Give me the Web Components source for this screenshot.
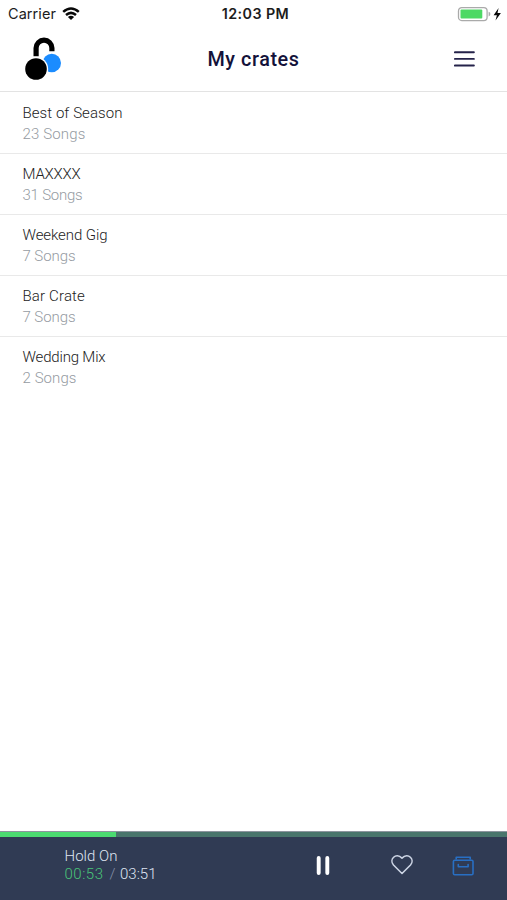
<!DOCTYPE html>
<html lang="en">
<head>
<meta charset="utf-8">
<title>My crates</title>
<style>
html,body{margin:0;height:100%;background:#fff;overflow:hidden}
body{font-family:Roboto,"Liberation Sans",sans-serif}
</style>
</head>
<body>
<crate-app></crate-app>
<script>
const define = (name, html, setup) => customElements.define(name, class extends HTMLElement {
  connectedCallback() {
    if (this.shadowRoot) return;
    const t = document.createElement('template');
    t.innerHTML = html;
    this.attachShadow({mode: 'open'}).append(t.content.cloneNode(true));
    if (setup) setup(this, this.shadowRoot);
  }
});

// A single line of text tracked to the advance width given in its "w" attribute.
define('tracked-text', `<style>
:host{display:block;white-space:pre;width:max-content}
span{display:inline-block}
</style><span><slot></slot></span>`, (el, root) => {
  const span = root.querySelector('span');
  const gap = (Number(el.getAttribute('w')) - span.getBoundingClientRect().width) / el.textContent.length;
  span.style.letterSpacing = gap.toFixed(3) + 'px';
});

define('status-bar', `<style>
:host{display:grid;grid-template-columns:1fr auto 1fr;align-items:center;height:27px;padding:0 5px 0 8px;box-sizing:border-box;color:#1c1c1c;font:400 14.5px/27px Inter,sans-serif}
.l{display:flex;align-items:center;gap:6px}.r{display:flex;justify-content:flex-end}
.time{font-weight:600;font-size:14.3px;margin-left:1px}
svg{display:block}
</style>
<div class="l"><tracked-text w="48">Carrier</tracked-text>
<svg width="18" height="14" viewBox="0 0 18 14"><g fill="none" stroke="#080808" stroke-width="2.5"><path d="M1.2 4.9Q9 -1.9 16.8 4.9"/><path d="M4 8Q9 3.7 14 8"/></g><path d="M5.9 9.9Q9 7.4 12.1 9.9L9 13Z" fill="#080808"/></svg></div>
<tracked-text class="time" w="67.5">12:03 PM</tracked-text>
<div class="r"><svg width="45" height="16" viewBox="0 0 45 16"><rect x="1.5" y="1.6" width="28.6" height="13" rx="3.3" fill="#fff" stroke="#aaa" stroke-width="1.3"/><rect x="3.5" y="3.6" width="21.8" height="9" rx="1" fill="#4cd964"/><path d="M31.6 5.7Q33.4 6.2 33.4 8.1T31.6 10.5Z" fill="#aaa"/><path d="M41.6 2L36.6 9.2H39.9L38.5 14.5L43.9 7H40.5Z" fill="#080808"/></svg></div>`);

define('app-header', `<style>
:host{display:grid;grid-template-columns:1fr auto 1fr;align-items:center;height:65px;border-bottom:1.5px solid #e3e3e3;box-sizing:border-box;padding:0 32px 0 24px;color:#13123a;font:500 19.8px/28px Roboto,sans-serif}
svg{display:block}.menu{justify-self:end}
.title{margin:2px 0 0 8px}
</style>
<svg width="40" height="46" viewBox="0 0 40 46"><circle cx="27.8" cy="27" r="9.2" fill="#1b8cff"/><path d="M12.1 20.2V12.1A7.9 7.9 0 0 1 27.9 12.1V15.2" fill="none" stroke="#000" stroke-width="5.2"/><circle cx="12" cy="33" r="12.2" fill="#fff"/><circle cx="12" cy="33" r="10.8"/></svg>
<tracked-text class="title" w="92">My crates</tracked-text>
<svg class="menu" width="21" height="18" viewBox="0 0 21 18"><path d="M.9 2.3H19.9M.9 8.9H19.9M.9 15.5H19.9" stroke="#25234a" stroke-width="1.9" stroke-linecap="round"/></svg>`);

define('crate-row', `<style>
:host{display:block;height:61.15px;box-sizing:border-box;padding:10.1px 22.5px 0;border-bottom:1px solid #e9e9e9;font:300 15px/21px Roboto,sans-serif;color:#222}
:host(:last-of-type){border:0}
::slotted([slot=count]){color:#959ba2}
</style><slot></slot><slot name="count"></slot>`);

define('play-bar', `<style>
:host{display:block;height:69px;background:#303b54;color:#dfe5f2}
.track{height:6px;background:#49756c;border-top:1px solid #8d959e;box-sizing:border-box}
.track i{display:block;width:116px;height:5px;background:#4bdb71}
.bar{display:grid;grid-template-columns:64.5px 1fr 84px 61px 54px;align-items:start;height:63px;font:300 15px/17.5px Roboto,sans-serif}
.info{grid-column:2;padding-top:11px}
.time{display:flex}.now{color:#49c478}.slash{margin:0 4.5px 0 6px;color:#8792a8}
svg{display:block}
</style>
<div class="track"><i></i></div>
<div class="bar"><div class="info"><tracked-text w="53">Hold On</tracked-text>
<div class="time"><tracked-text class="now" w="39">00:53</tracked-text><tracked-text class="slash" w="6">/</tracked-text><tracked-text w="36.5">03:51</tracked-text></div></div>
<svg style="margin:18px 0 0 6px" width="16" height="22" viewBox="0 0 16 22"><path d="M4.7 3V18M13.3 3V18" stroke="#fff" stroke-width="3.9" stroke-linecap="round"/></svg>
<svg style="margin:16px 0 0 -2px" width="24" height="23" viewBox="0 0 24 23"><path d="M12 20.5L3.5 12C-1.2 6.7 5.7-1.1 12 5.1C18.3-1.1 25.2 6.7 20.5 12Z" fill="none" stroke="#ccd4e4" stroke-width="1.6" stroke-linejoin="round"/></svg>
<svg style="margin:17px 0 0 -2px" width="24" height="24" viewBox="0 0 24 24"><g fill="none" stroke="#286fc3" stroke-width="1.6" stroke-linecap="round" stroke-linejoin="round"><rect x="2.4" y="6.2" width="19.6" height="14.6" rx="1.3"/><path d="M5.2 5V3.3H19.2V5M7.3 10.6V12.7H17.1V10.6"/></g></svg>
</div>`);

define('crate-app', `<style>
:host{display:flex;flex-direction:column;width:100%;height:900px;background:#fff}
main{flex:1;padding-top:.6px}
</style>
<status-bar></status-bar><app-header></app-header><main></main><play-bar></play-bar>`, (el, root) => {
  root.querySelector('main').innerHTML = [
    ['Best of Season', 100, '23 Songs', 63], ['MAXXXX', 58, '31 Songs', 60],
    ['Weekend Gig', 85, '7 Songs', 53], ['Bar Crate', 62.5, '7 Songs', 53], ['Wedding Mix', 83, '2 Songs', 54]
  ].map(([name, w, count, cw]) => `<crate-row><tracked-text w="${w}">${name}</tracked-text><tracked-text slot="count" w="${cw}">${count}</tracked-text></crate-row>`).join('');
});
</script>
</body>
</html>
